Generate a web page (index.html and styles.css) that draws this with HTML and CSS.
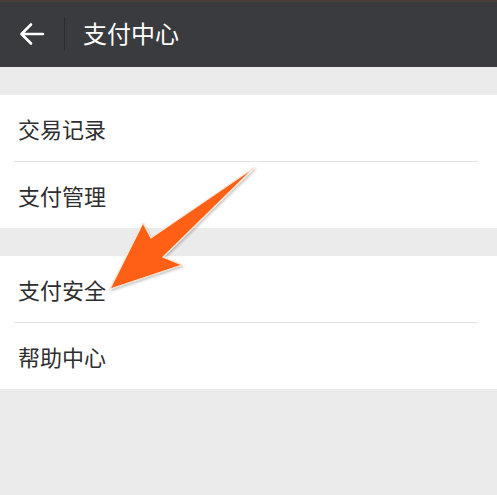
FILE: index.html
```html
<!DOCTYPE html>
<html lang="zh-CN">
<head>
<meta charset="utf-8">
<title>支付中心</title>
<link rel="stylesheet" href="styles.css">
</head>
<body>
<div class="page">
  <header class="topbar">
    <div class="back">
      <svg width="26" height="24" viewBox="0 0 26 24" aria-hidden="true">
        <path d="M24 12H3M12 2.5L2.5 12L12 21.5" fill="none" stroke="#ffffff" stroke-width="2.6" stroke-linecap="round" stroke-linejoin="round"/>
      </svg>
    </div>
    <div class="sep"></div>
    <h1 class="title">支付中心</h1>
  </header>
  <section class="group">
    <div class="row">交易记录</div>
    <div class="row">支付管理</div>
  </section>
  <section class="group">
    <div class="row">支付安全</div>
    <div class="row">帮助中心</div>
  </section>
  <svg class="pointer" width="497" height="495" viewBox="0 0 497 495" aria-hidden="true">
    <defs>
      <filter id="sh" x="-20%" y="-20%" width="140%" height="140%">
        <feDropShadow dx="1" dy="1.5" stdDeviation="1.2" flood-color="#000" flood-opacity="0.25"/>
      </filter>
    </defs>
    <polygon points="255,167 163,257 182,265 110,289 143,223 151,238" fill="#ff6114" stroke="#fde6d6" stroke-width="1.2" stroke-linejoin="miter" filter="url(#sh)"/>
  </svg>
</div>
</body>
</html>
```

FILE: styles.css
```css
html, body {
  margin: 0;
  padding: 0;
}
body {
  background: #ebebeb;
  font-family: "Noto Sans CJK SC", "Noto Sans", sans-serif;
}
.page {
  position: relative;
  width: 497px;
  height: 495px;
  overflow: hidden;
  background: #ebebeb;
}
.topbar {
  height: 65px;
  background: #3a3b3f;
  border-top: 2px solid #4b3e3a;
  display: flex;
  align-items: center;
}
.back {
  width: 26px;
  height: 24px;
  margin-left: 19px;
  margin-top: -1px;
  display: flex;
}
.sep {
  width: 1px;
  height: 34px;
  background: #2c2d30;
  margin-left: 19px;
  margin-top: -1px;
}
.title {
  margin: -3px 0 0 18px;
  font-size: 24px;
  font-weight: 400;
  color: #ffffff;
  line-height: 1;
}
.group {
  background: #ffffff;
  margin-top: 28px;
  padding: 0 19px 0 14px;
}
.row {
  height: 66px;
  display: flex;
  align-items: center;
  padding-left: 4px;
  font-size: 22px;
  color: #2e2e2e;
  line-height: 1;
}
.row + .row {
  border-top: 1px solid #e2e2e2;
}
.pointer {
  position: absolute;
  left: 0;
  top: 0;
  pointer-events: none;
}
```
